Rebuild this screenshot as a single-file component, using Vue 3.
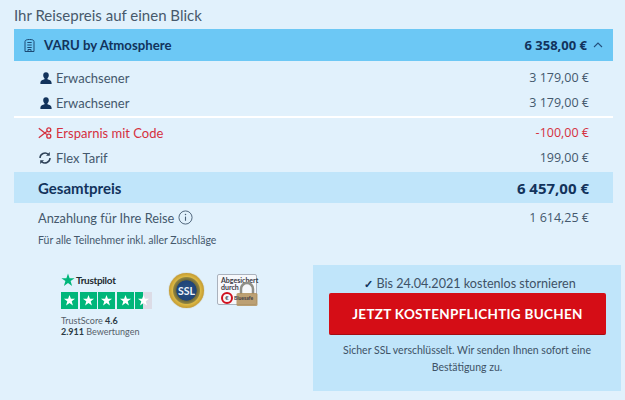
<script setup>
const people = [
  { id: 1, label: 'Erwachsener', price: '3 179,00 €' },
  { id: 2, label: 'Erwachsener', price: '3 179,00 €' }
]
const stars = [1, 2, 3, 4, 5]
</script>

<template>
  <main class="page">
    <h1 class="title">Ihr Reisepreis auf einen Blick</h1>
    <section class="hotel-bar">
      <div class="hotel-name">
        <svg class="hotel-icon" viewBox="0 0 11 13" width="11" height="13">
          <path d="M1 12.500V2.500C1 1 3 .5 5.500 .5S10 1 10 2.500v10zM3.300 3.500h4.400M3.300 6h4.400M3.300 8.500h4.400M4 12.500v-2h3v2" fill="none" stroke="#1c4a74" stroke-width="1"/>
        </svg>
        <span>VARU by Atmosphere</span>
      </div>
      <div class="hotel-price">
        <span class="num">6 358,00 €</span>
        <svg viewBox="0 0 10 6" width="10" height="6"><path d="M1 5l4-4 4 4" fill="none" stroke="#24507c" stroke-width="1.100"/></svg>
      </div>
    </section>

    <section class="rows people">
      <div v-for="p in people" :key="p.id" class="row">
        <span class="label">
          <svg class="icon" viewBox="0 0 12 12" width="12" height="12">
            <path d="M6 .3c1.800 0 2.800 1.300 2.800 3 0 1.300-.6 2.400-1.300 3v1c1.700.5 3.900 1 4.100 3.700V12H.4v-1c.2-2.700 2.400-3.200 4.100-3.700v-1c-.7-.6-1.300-1.700-1.300-3C3.200 1.600 4.200.3 6 .3z" fill="#12335c"/>
          </svg>
          {{ p.label }}
        </span>
        <span class="amount num">{{ p.price }}</span>
      </div>
    </section>

    <section class="rows extras">
      <div class="row saving">
        <span class="label">
          <svg class="icon" viewBox="0 0 14 12" width="14" height="12">
            <path d="M.8 1.200l8 6.200M.8 10.800l8-6.200" stroke="#d5303e" stroke-width="1.300" fill="none"/>
            <circle cx="10.800" cy="2.800" r="2" fill="none" stroke="#d5303e" stroke-width="1.300"/>
            <circle cx="10.800" cy="9.200" r="2" fill="none" stroke="#d5303e" stroke-width="1.300"/>
          </svg>
          Ersparnis mit Code
        </span>
        <span class="amount num">-100,00 €</span>
      </div>
      <div class="row">
        <span class="label">
          <svg class="icon" viewBox="0 0 14 14" width="14" height="14">
            <path d="M2 7a5 5 0 0 1 8.300-3.700M12 7a5 5 0 0 1-8.300 3.700" fill="none" stroke="#2e4258" stroke-width="1.500"/>
            <path d="M11.800 1v3.800H8zM2.200 13V9.200H6z" fill="#2e4258"/>
          </svg>
          Flex Tarif
        </span>
        <span class="amount num">199,00 €</span>
      </div>
    </section>

    <section class="total-bar">
      <span>Gesamtpreis</span>
      <span class="total-price num">6 457,00 €</span>
    </section>

    <section class="deposit">
      <span class="deposit-label">
        Anzahlung für Ihre Reise
        <svg viewBox="0 0 16 16" width="15" height="15">
          <circle cx="8" cy="8" r="7" fill="none" stroke="#4a6076" stroke-width="1"/>
          <path d="M8 7v4.500" stroke="#4a6076" stroke-width="1.200"/>
          <circle cx="8" cy="4.700" r=".8" fill="#4a6076"/>
        </svg>
      </span>
      <span class="amount num">1 614,25 €</span>
    </section>
    <p class="note">Für alle Teilnehmer inkl. aller Zuschläge</p>

    <section class="bottom">
      <div class="trust">
        <div class="trustpilot">
          <div class="tp-brand">
            <svg viewBox="0 0 14 14" width="14" height="14"><path d="M7 .5l1.600 4.700h5l-4 2.900 1.500 4.800L7 10l-4.100 2.900 1.500-4.800-4-2.900h5z" fill="#00b67a"/></svg>
            <span>Trustpilot</span>
          </div>
          <div class="tp-stars">
            <span v-for="s in stars" :key="s" class="tp-star" :class="{ half: s === 5 }">
              <svg viewBox="0 0 14 14" width="13" height="13"><path d="M7 1l1.500 4.200h4.500L9.400 7.900l1.300 4.400L7 9.700l-3.700 2.600 1.300-4.400L1 5.200h4.500z" fill="#fff"/></svg>
            </span>
          </div>
          <p class="tp-text first">TrustScore <b>4.6</b></p>
          <p class="tp-text"><b>2.911</b> Bewertungen</p>
        </div>
        <div class="ssl-seal"><span>SSL</span></div>
        <div class="shop-seal">
          <span class="seal-text">Abgesichert<br>durch</span>
          <span class="seal-logo"><i>€</i><em>Bluesafe</em></span>
          <svg class="lock" viewBox="0 0 24 26" width="24" height="26">
            <path d="M6 13V8a6 6 0 0 1 12 0v5" fill="none" stroke="#8f8f88" stroke-width="2.500"/>
            <rect x="1.500" y="12" width="21" height="13" rx="1.500" fill="#b2905a" fill-opacity=".85"/>
          </svg>
        </div>
      </div>

      <aside class="booking">
        <p class="cancel"><span class="check">✓</span> Bis 24.04.2021 kostenlos stornieren</p>
        <button class="cta" type="button">JETZT KOSTENPFLICHTIG BUCHEN</button>
        <p class="secure">Sicher SSL verschlüsselt. Wir senden Ihnen sofort eine Bestätigung zu.</p>
      </aside>
    </section>
  </main>
</template>

<style>
html, body { margin: 0; background: #e1f1fc; }
</style>

<style scoped>
.page {
  width: 625px;
  height: 400px;
  box-sizing: border-box;
  padding: 6px 12px 0 14px;
  overflow: hidden;
  background: #e1f1fc;
  color: #44586c;
  font-family: Lato, "Noto Sans", sans-serif;
  font-size: 13px;
}
.num { font-family: "Open Sans", Lato, sans-serif; }
.title {
  margin: 0;
  height: 23px;
  font-size: 15px;
  font-weight: 400;
  line-height: 19px;
  color: #47596b;
}
.hotel-bar, .total-bar, .row, .deposit {
  display: flex;
  align-items: center;
  justify-content: space-between;
}
.hotel-bar {
  height: 32px;
  padding: 0 10px 0 10px;
  background: #6cc8f5;
  color: #12335c;
  font-weight: 700;
  font-size: 13.200px;
}
.hotel-name { display: flex; align-items: center; gap: 9px; }
.hotel-price { display: flex; align-items: center; gap: 6px; font-size: 13px; }
.rows { padding: 0 24px 0 26px; }
.people { box-sizing: border-box; padding-top: 4px; height: 57px; border-bottom: 2px solid #fff; }
.extras { box-sizing: border-box; height: 54px; padding-top: 2px; padding-left: 24px; }
.row { height: 25px; }
.label { display: flex; align-items: center; gap: 4px; }
.icon { flex: none; }
.amount { font-size: 12.500px; }
.saving { color: #d5303e; }
.total-bar {
  height: 31px;
  padding: 0 24px;
  background: #c0e5fa;
  color: #12335c;
  font-size: 15px;
  font-weight: 700;
}
.total-price { font-size: 15px; }
.deposit { height: 29px; padding: 0 24px; }
.deposit-label { display: flex; align-items: center; gap: 4px; font-size: 12.800px; }
.note {
  margin: 0;
  height: 33px;
  padding: 1px 0 0 24px;
  box-sizing: border-box;
  font-size: 10.500px;
  line-height: 14px;
}
.bottom { display: flex; justify-content: space-between; }
.trust {
  display: flex;
  align-items: flex-start;
  padding: 8px 0 0 47px;
}
.trustpilot { width: 108px; }
.tp-brand {
  display: flex;
  align-items: center;
  gap: 1px;
  height: 14px;
  font-size: 10px;
  letter-spacing: -.3px;
  color: #1e2a30;
  font-weight: 700;
}
.tp-stars { display: flex; gap: 1.500px; margin-top: 5px; width: 92px; }
.tp-star {
  width: 17px;
  height: 17px;
  background: #00b67a;
  display: flex;
  align-items: center;
  justify-content: center;
}
.tp-star.half { background: linear-gradient(90deg, #00b67a 45%, #dcdce6 45%); }
.tp-text {
  margin: 0;
  font-size: 9px;
  line-height: 11px;
  color: #55606a;
}
.tp-text.first { margin-top: 6px; }
.tp-text b { color: #2b3a44; }
.ssl-seal {
  width: 35px;
  height: 35px;
  border-radius: 50%;
  box-sizing: border-box;
  background: radial-gradient(circle closest-side, #2a5285 0, #1f4478 56%, #6f6a38 60%, #8f8340 74%, #dcb945 80%, #c49a30 100%);
  color: #eef4fa;
  font-size: 10.500px;
  font-weight: 700;
  display: flex;
  align-items: center;
  justify-content: center;
  box-shadow: 0 0 1px #a8862a;
}
.shop-seal {
  position: relative;
  box-sizing: border-box;
  width: 40px;
  height: 31px;
  margin: 1px 0 0 13px;
  padding: 2px 3px;
  background: #f6f8fb;
  border: 1px solid #aab2bd;
  border-radius: 2px;
  font-size: 7px;
  line-height: 7px;
  color: #3a3a44;
}
.seal-text { display: block; font-weight: 700; }
.seal-logo { display: flex; align-items: center; gap: 1px; margin-top: 1px; }
.seal-logo i {
  box-sizing: border-box;
  flex: none;
  width: 12px;
  height: 12px;
  border: 2px solid #d0101e;
  border-radius: 50%;
  font-size: 6px;
  line-height: 8px;
  text-align: center;
  font-style: normal;
}
.seal-logo em { font-size: 5px; font-style: normal; font-weight: 700; position: relative; z-index: 1; }
.lock { position: absolute; right: -3px; bottom: -3px; }
.booking {
  width: 308px;
  height: 126px;
  box-sizing: border-box;
  margin-right: -8px;
  padding: 9px 16px 0;
  background: #c0e5fa;
  text-align: center;
}
.cancel {
  margin: 0;
  height: 19px;
  line-height: 19px;
  padding-left: 6px;
  font-size: 12.600px;
  color: #3e5266;
}
.check { color: #12335c; font-size: 11px; font-weight: 700; }
.cta {
  display: block;
  width: 277px;
  height: 42px;
  border: 0;
  border-radius: 2px;
  background: #d50d16;
  border-bottom: 1px solid #a40c12;
  color: #fff;
  font-family: inherit;
  font-size: 13.500px;
  font-weight: 700;
  letter-spacing: .3px;
}
.secure {
  margin: 7px 0 0;
  font-size: 10.500px;
  line-height: 17px;
  color: #3e5266;
}
</style>
